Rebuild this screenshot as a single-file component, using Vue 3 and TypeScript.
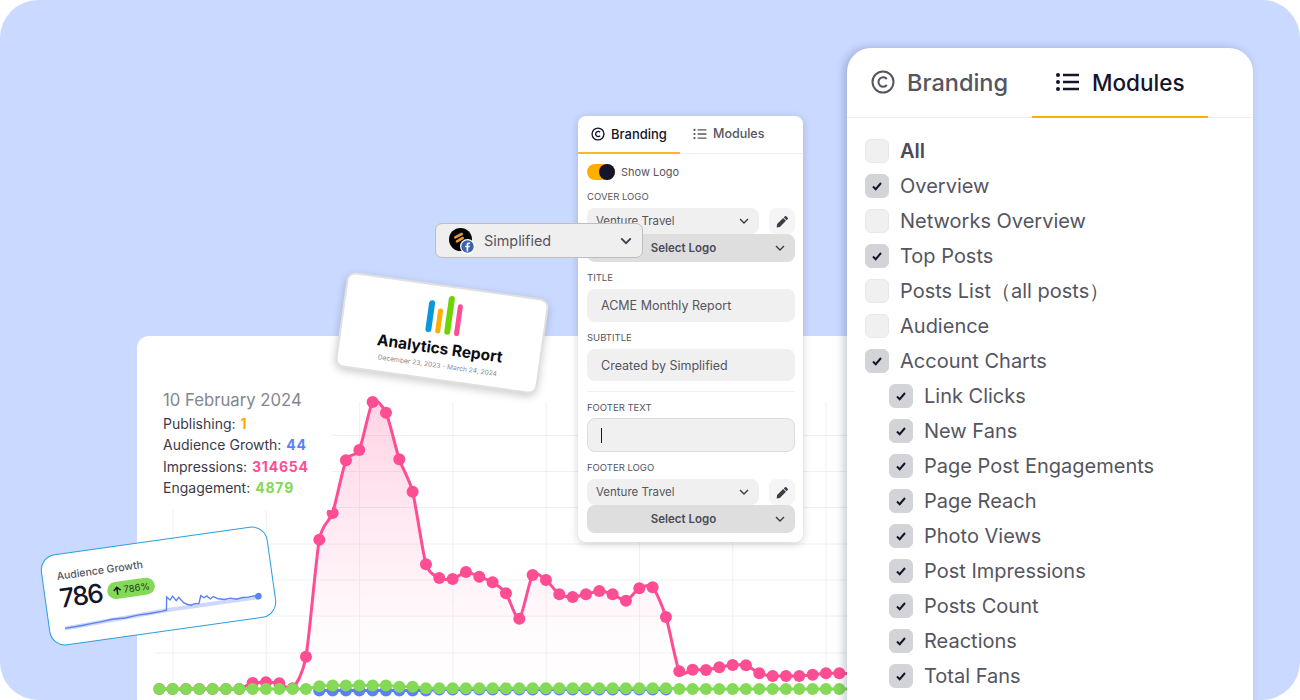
<template>
  <div class="stage">
    <!-- chart card -->
    <div class="chart-card">
      <svg class="chart" width="900" height="364" viewBox="137 336 900 364">
        <defs>
          <linearGradient id="pinkFill" x1="0" y1="0" x2="0" y2="1">
            <stop offset="0" stop-color="#ff4d94" stop-opacity="0.24" />
            <stop offset="0.8" stop-color="#ff4d94" stop-opacity="0.02" />
            <stop offset="1" stop-color="#ff4d94" stop-opacity="0" />
          </linearGradient>
        </defs>
        <line v-for="x in gridX" :key="'v' + x" :x1="x" :x2="x" y1="402" y2="695" class="grid" />
        <line v-for="y in gridY" :key="'h' + y" x1="154" x2="847" :y1="y" :y2="y" class="grid" />
        <path :d="areaPath" fill="url(#pinkFill)" />
        <path :d="linePath(bluePts)" class="line" stroke="#5b82f5" />
        <circle v-for="p in bluePts" :key="'b' + p.x" :cx="p.x" :cy="p.y" r="6" fill="#5b82f5" />
        <path :d="linePath(pinkPts)" class="line" stroke="#ff4d94" />
        <circle v-for="p in pinkPts" :key="'p' + p.x" :cx="p.x" :cy="p.y" r="6" fill="#ff4d94" />
        <path :d="linePath(greenPts)" class="line" stroke="#84d957" />
        <circle v-for="p in greenPts" :key="'g' + p.x" :cx="p.x" :cy="p.y" r="6" fill="#84d957" />
      </svg>
      <div class="chart-tip">
        <div class="tip-date">10 February 2024</div>
        <div class="tip-row">Publishing: <b class="c-orange">1</b></div>
        <div class="tip-row">Audience Growth: <b class="c-blue">44</b></div>
        <div class="tip-row">Impressions: <b class="c-pink">314654</b></div>
        <div class="tip-row">Engagement: <b class="c-green">4879</b></div>
      </div>
    </div>

    <!-- audience growth card -->
    <div class="growth-card">
      <div class="growth-title">Audience Growth</div>
      <div class="growth-main">
        <span class="growth-num">786</span>
        <span class="growth-pill">
          <svg width="10" height="10" viewBox="0 0 10 10"><path d="M5 9V1.5M1.6 4.8 5 1.4l3.4 3.4" fill="none" stroke="#14142b" stroke-width="1.5" /></svg>
          786%
        </span>
      </div>
      <svg class="spark" width="225" height="88" viewBox="0 0 225 88">
        <path d="M14 73L118 69L210 69" fill="none" stroke="#5b82f5" stroke-opacity="0.3" stroke-width="4" />
        <path d="M14 73L30 72.5L38 72L50 71.5L62 70.5L75 71L88 70L100 70L112 69.5L117 69L119 56L122 59.5L125 56L128 61L131 58L135 64L138 66L142 67.500L146 66.500L150 67L153 59.500L156 62L159 60.500L162 64L165 62L170 65L176 66.500L182 66L188 68L194 67L200 67.500L205 67L210 68" fill="none" stroke="#5b82f5" stroke-width="1.4" />
        <circle cx="210" cy="68" r="3.3" fill="#5b82f5" />
      </svg>
    </div>

    <!-- report cover -->
    <div class="report-card">
      <div class="report-bars">
        <span class="bar bar-blue"></span>
        <span class="bar bar-orange"></span>
        <span class="bar bar-green"></span>
        <span class="bar bar-pink"></span>
      </div>
      <div class="report-title">Analytics Report</div>
      <div class="report-date">December 23, 2023 - March 24, 2024</div>
    </div>

    <!-- small settings panel -->
    <div class="mini-panel">
      <div class="mini-tabs">
        <div class="mini-tab active">
          <svg width="14" height="14" viewBox="0 0 24 24"><circle cx="12" cy="12" r="10.2" fill="none" stroke="currentColor" stroke-width="2.3" /><path d="M15.6 9a4.4 4.4 0 1 0 0 6" fill="none" stroke="currentColor" stroke-width="2.3" /></svg>
          Branding
        </div>
        <div class="mini-tab">
          <svg width="14" height="14" viewBox="0 0 24 24"><path d="M8 5h15M8 12h15M8 19h15" stroke="currentColor" stroke-width="2.4" /><circle cx="2.5" cy="5" r="1.9" fill="currentColor" /><circle cx="2.5" cy="12" r="1.9" fill="currentColor" /><circle cx="2.5" cy="19" r="1.9" fill="currentColor" /></svg>
          Modules
        </div>
      </div>
      <div class="mini-body">
        <div class="toggle-row">
          <span class="toggle"><span class="toggle-knob"></span></span>
          Show Logo
        </div>
        <div class="label label-first">COVER LOGO</div>
        <div class="logo-row">
          <div class="logo-select">
            Venture Travel
            <svg class="chev" width="10" height="6" viewBox="0 0 10 6"><path d="M1 1l4 4 4-4" /></svg>
          </div>
          <div class="pencil">
            <svg width="13" height="13" viewBox="0 0 12 12"><path d="M8.2 1.2a.9.9 0 0 1 1.3 0l1.3 1.3a.9.9 0 0 1 0 1.3l-1 1-2.6-2.6zM6.600 2.800l2.600 2.600-5.600 5.600L.6 11.600 1 8.400z" fill="#3d3d4a" /></svg>
          </div>
        </div>
        <div class="select-logo">
          Select Logo
          <svg class="chev" width="10" height="6" viewBox="0 0 10 6"><path d="M1 1l4 4 4-4" /></svg>
        </div>
        <div class="label">TITLE</div>
        <div class="text-input">ACME Monthly Report</div>
        <div class="label">SUBTITLE</div>
        <div class="text-input short">Created by Simplified</div>
        <div class="divider"></div>
        <div class="label tight">FOOTER TEXT</div>
        <div class="text-input focus"><span class="caret"></span></div>
        <div class="label">FOOTER LOGO</div>
        <div class="logo-row">
          <div class="logo-select">
            Venture Travel
            <svg class="chev" width="10" height="6" viewBox="0 0 10 6"><path d="M1 1l4 4 4-4" /></svg>
          </div>
          <div class="pencil">
            <svg width="13" height="13" viewBox="0 0 12 12"><path d="M8.2 1.2a.9.9 0 0 1 1.3 0l1.3 1.3a.9.9 0 0 1 0 1.3l-1 1-2.6-2.6zM6.600 2.800l2.600 2.600-5.600 5.600L.6 11.600 1 8.400z" fill="#3d3d4a" /></svg>
          </div>
        </div>
        <div class="select-logo">
          Select Logo
          <svg class="chev" width="10" height="6" viewBox="0 0 10 6"><path d="M1 1l4 4 4-4" /></svg>
        </div>
      </div>
    </div>

    <!-- account dropdown -->
    <div class="account">
      <span class="avatar">
        <svg width="23" height="23" viewBox="0 0 23 23">
          <circle cx="11.5" cy="11.5" r="11.5" fill="#050505" />
          <path d="M6.300 9.300 12.700 6M8 13.300 13.700 10" stroke="#e59a35" stroke-width="2.600" stroke-linecap="round" />
        </svg>
        <svg class="fb" width="15" height="15" viewBox="0 0 15 15">
          <circle cx="7.5" cy="7.5" r="7.5" fill="#fff" />
          <circle cx="7.5" cy="7.5" r="6.2" fill="#3f62ad" />
          <path d="M8.200 12.400V8.300h1.400l.2-1.600H8.200v-1c0-.5.2-.8.8-.8h.9V3.500c-.4-.1-.8-.1-1.200-.1-1.300 0-2.100.8-2.100 2.100v1.200H5.200v1.600h1.400v4.100z" fill="#fff" />
        </svg>
      </span>
      <span class="account-name">Simplified</span>
      <svg class="account-chev" width="12" height="8" viewBox="0 0 12 8"><path d="M1.200 1.400 6 6.200l4.800-4.800" /></svg>
    </div>

    <!-- big modules panel -->
    <div class="big-panel">
      <div class="big-tabs">
        <div class="big-tab">
          <svg width="24" height="24" viewBox="0 0 24 24"><circle cx="12" cy="12" r="10.500" fill="none" stroke="currentColor" stroke-width="2" /><path d="M15.800 9a4.700 4.700 0 1 0 0 6" fill="none" stroke="currentColor" stroke-width="2" /></svg>
          Branding
        </div>
        <div class="big-tab active">
          <svg width="24" height="24" viewBox="0 0 24 24"><path d="M7 5h16M7 12h16M7 19h16" stroke="currentColor" stroke-width="2.400" /><circle cx="2" cy="5" r="2" fill="currentColor" /><circle cx="2" cy="12" r="2" fill="currentColor" /><circle cx="2" cy="19" r="2" fill="currentColor" /></svg>
          Modules
        </div>
      </div>
      <div class="module-list">
        <div v-for="m in modules" :key="m.name" class="module" :class="{ sub: m.sub, strong: m.strong }">
          <span class="box" :class="{ on: m.on }">
            <svg v-if="m.on" width="12" height="12" viewBox="0 0 12 12"><path d="M2 6.500 4.700 9.200 10 3" fill="none" stroke="#14142b" stroke-width="2" /></svg>
          </span>
          {{ m.name }}
        </div>
      </div>
    </div>
  </div>
</template>

<script setup lang="ts">
interface Pt {
  x: number
  y: number
}

interface Module {
  name: string
  on?: boolean
  sub?: boolean
  strong?: boolean
}

const modules: Module[] = [
  { name: 'All', strong: true },
  { name: 'Overview', on: true },
  { name: 'Networks Overview' },
  { name: 'Top Posts', on: true },
  { name: 'Posts List（all posts）' },
  { name: 'Audience' },
  { name: 'Account Charts', on: true },
  { name: 'Link Clicks', on: true, sub: true },
  { name: 'New Fans', on: true, sub: true },
  { name: 'Page Post Engagements', on: true, sub: true },
  { name: 'Page Reach', on: true, sub: true },
  { name: 'Photo Views', on: true, sub: true },
  { name: 'Post Impressions', on: true, sub: true },
  { name: 'Posts Count', on: true, sub: true },
  { name: 'Reactions', on: true, sub: true },
  { name: 'Total Fans', on: true, sub: true },
]

const gridX = [173, 266.3, 359.6, 452.9, 546.2, 639.5, 732.8, 826.1]
const gridY = [435.5, 471.5, 507.5, 544, 580, 616, 653]

const step = 13.333
const startX = 159.3

const pinkY = [
  689, 689, 689, 689, 689, 689, 689, 683, 682.3, 683.3, 688.3, 656.7, 539.7, 513, 460.3, 450, 402, 412.7, 459.3,
  491.7, 564.3, 578, 579, 572, 576.7, 582.3, 593.3, 618.7, 575, 580, 594.3, 597, 594.3, 591, 594.3, 600.7, 588.3,
  587.3, 617, 671.3, 669.7, 670, 667.3, 665, 665.3, 673.3, 676, 676, 676, 674.7, 673.3, 673.3, 674,
]

const toPts = (ys: number[], from = 0): Pt[] => ys.map((y, i) => ({ x: startX + (i + from) * step, y }))

const pinkPts = toPts(pinkY)
const greenPts = toPts(
  pinkY.map((_, i) => {
    if (i < 12) return 689
    if (i === 12) return 686.3
    if (i < 18) return 685.4
    if (i < 20) return 686.7
    if (i < 39) return 688.2
    return 689
  }),
)
const bluePts = toPts(
  Array.from({ length: 27 }, (_, i) => (i < 9 ? 690.4 : 689.4)),
  12,
)

// slightly eased line, close to what the chart lib draws
const linePath = (pts: Pt[]) => {
  const t = 0.12
  let d = `M${pts[0].x} ${pts[0].y}`
  for (let i = 0; i < pts.length - 1; i++) {
    const p0 = pts[i - 1] ?? pts[i]
    const p1 = pts[i]
    const p2 = pts[i + 1]
    const p3 = pts[i + 2] ?? p2
    const c1x = p1.x + (p2.x - p0.x) * t
    const c1y = p1.y + (p2.y - p0.y) * t
    const c2x = p2.x - (p3.x - p1.x) * t
    const c2y = p2.y - (p3.y - p1.y) * t
    d += `C${c1x.toFixed(1)} ${c1y.toFixed(1)} ${c2x.toFixed(1)} ${c2y.toFixed(1)} ${p2.x.toFixed(1)} ${p2.y.toFixed(1)}`
  }
  return d
}

const areaPath = `${linePath(pinkPts)}L${pinkPts[pinkPts.length - 1].x} 689L${startX} 689Z`
</script>

<style scoped>
.stage {
  position: relative;
  width: 1300px;
  height: 700px;
  overflow: hidden;
  background: #c9d9ff;
  border-radius: 38px;
  font-family: Inter, "Noto Sans", sans-serif;
  color: #4b4b57;
}

.chart-card {
  position: absolute;
  left: 137px;
  top: 336px;
  width: 900px;
  height: 364px;
  background: #fff;
  border-radius: 12px 0 0 0;
}

.chart {
  display: block;
}

.grid {
  stroke: #f0f0f2;
  stroke-width: 1;
}

.line {
  fill: none;
  stroke-width: 3;
}

.chart-tip {
  position: absolute;
  left: 17px;
  top: 48px;
  width: 178px;
  height: 126px;
  padding: 4px 0 0 9px;
  box-sizing: border-box;
  background: #fff;
  color: #3a3a48;
}

.tip-date {
  font-size: 16.7px;
  line-height: 24px;
  color: #85858d;
}

.tip-row {
  font-size: 14px;
  line-height: 21.5px;
  white-space: nowrap;
  position: relative;
  top: 0.5px;
}

.tip-row b {
  font-weight: 700;
  margin-left: 1px;
  letter-spacing: 0.8px;
}

.c-orange { color: #ffa800; }
.c-blue { color: #5b82f5; }
.c-pink { color: #ff4d94; }
.c-green { color: #84d957; }

.growth-card {
  position: absolute;
  left: 44px;
  top: 540px;
  width: 229px;
  height: 92px;
  box-sizing: border-box;
  padding: 14.5px 0 0 14px;
  background: #fff;
  border: 1px solid #2b9fdc;
  border-radius: 16px;
  transform: rotate(-8deg);
}

.growth-title {
  font-size: 10.5px;
  line-height: 14px;
  font-weight: 500;
  color: #55555f;
}

.growth-main {
  display: flex;
  align-items: center;
  gap: 6px;
  margin-top: 2px;
}

.growth-num {
  font-size: 26px;
  line-height: 26px;
  font-weight: 500;
  letter-spacing: -1.6px;
  color: #14142b;
}

.growth-pill {
  display: flex;
  align-items: center;
  gap: 1px;
  height: 17px;
  padding: 0 5px;
  border-radius: 9px;
  background: #84d957;
  font-size: 9.5px;
  color: #1e3a1a;
}

.spark {
  position: absolute;
  left: 1px;
  top: 1px;
}

.report-card {
  position: absolute;
  left: 340px;
  top: 285px;
  width: 204px;
  height: 96px;
  box-sizing: border-box;
  padding-top: 8px;
  display: flex;
  flex-direction: column;
  align-items: center;
  background: #fff;
  border: 2px solid #e0e0e0;
  border-radius: 9px;
  box-shadow: 0 3px 8px rgba(0, 0, 0, 0.2);
  transform: rotate(8deg);
}

.report-bars {
  display: flex;
  align-items: flex-end;
  gap: 4px;
  height: 39px;
}

.bar {
  width: 5.5px;
  border-radius: 3px;
}

.bar-blue { height: 32px; background: #0a98dc; }
.bar-orange { height: 25px; background: #ffae00; }
.bar-green { height: 39px; background: #6cd400; }
.bar-pink { height: 32px; background: #ff4d94; }

.report-title {
  margin-top: 5px;
  font-size: 15.5px;
  line-height: 20px;
  font-weight: 700;
  color: #0c0c14;
  white-space: nowrap;
}

.report-date {
  font-size: 6.7px;
  line-height: 10px;
  margin-top: 2px;
  color: #8a8a90;
  white-space: nowrap;
}

.mini-panel {
  position: absolute;
  left: 578px;
  top: 116px;
  width: 225px;
  height: 426px;
  background: #fff;
  border-radius: 8px;
  box-shadow: 0 2px 8px rgba(0, 0, 0, 0.18);
}

.mini-tabs {
  display: flex;
  height: 38px;
  box-sizing: border-box;
  border-bottom: 1px solid #eee;
}

.mini-tab {
  display: flex;
  align-items: center;
  gap: 6px;
  height: 38px;
  box-sizing: border-box;
  padding: 0 0 3px 13px;
  font-size: 12.5px;
  font-weight: 500;
  color: #55555f;
}

.mini-tab.active {
  width: 102px;
  padding-bottom: 1px;
  font-size: 13px;
  color: #14142b;
  border-bottom: 2px solid #ffb52e;
}

.mini-body {
  padding: 10px 8px 0 9px;
}

.toggle-row {
  display: flex;
  align-items: center;
  gap: 6px;
  height: 16px;
  font-size: 11px;
  color: #55555f;
}

.toggle {
  position: relative;
  display: block;
  width: 28px;
  height: 16px;
  border-radius: 8px;
  background: #ffae00;
}

.toggle-knob {
  position: absolute;
  right: 0;
  top: 0;
  width: 16px;
  height: 16px;
  border-radius: 50%;
  background: #14142b;
}

.label {
  height: 12px;
  margin: 10px 0 5px;
  font-size: 9.5px;
  line-height: 12px;
  color: #55555f;
}

.label-first {
  margin-top: 11px;
}

.label.tight {
  margin-bottom: 4px;
}

.logo-row {
  display: flex;
  gap: 10px;
  height: 26px;
}

.logo-select {
  flex: 1;
  display: flex;
  align-items: center;
  justify-content: space-between;
  padding: 0 10px 0 9px;
  background: #f0f0f0;
  border-radius: 8px;
  font-size: 11.5px;
  color: #55555f;
}

.pencil {
  display: flex;
  align-items: center;
  justify-content: center;
  width: 26px;
  border-radius: 7px;
  background: #f5f5f5;
}

.chev {
  fill: none;
  stroke: #3d3d4a;
  stroke-width: 1.4;
}

.select-logo {
  position: relative;
  display: flex;
  align-items: center;
  justify-content: center;
  height: 28px;
  padding-right: 15px;
  background: #dedede;
  border-radius: 8px;
  font-size: 11.5px;
  font-weight: 600;
  color: #4b4b57;
}

.select-logo .chev {
  position: absolute;
  right: 10px;
  top: 11px;
}

.text-input {
  display: flex;
  align-items: center;
  height: 33px;
  box-sizing: border-box;
  padding-left: 14px;
  background: #f0f0f0;
  border-radius: 8px;
  font-size: 12.5px;
  color: #55555f;
}

.text-input.short {
  height: 32px;
}

.text-input.focus {
  height: 34px;
  border: 1px solid #dcdcdc;
  padding-left: 13px;
}

.caret {
  display: block;
  width: 1px;
  height: 15px;
  background: #14142b;
}

.divider {
  height: 1px;
  margin-top: 10px;
  background: #f1f1f1;
}

.account {
  position: absolute;
  left: 435px;
  top: 223px;
  width: 208px;
  height: 35px;
  box-sizing: border-box;
  display: flex;
  align-items: center;
  padding-left: 13px;
  background: #efefef;
  border: 1px solid #bdbdc2;
  border-radius: 7px;
}

.avatar {
  position: relative;
  display: block;
  width: 23px;
  height: 23px;
  margin-top: -2px;
}

.avatar svg {
  display: block;
}

.fb {
  position: absolute;
  left: 11px;
  top: 11px;
}

.account-name {
  margin-left: 12px;
  font-size: 14.4px;
  color: #55555f;
}

.account-chev {
  position: absolute;
  right: 10px;
  top: 13px;
  fill: none;
  stroke: #3d3d4a;
  stroke-width: 1.8;
}

.big-panel {
  position: absolute;
  left: 847px;
  top: 48px;
  width: 406px;
  height: 700px;
  background: #fff;
  border-radius: 24px;
  box-shadow: -3px 0 8px rgba(30, 40, 80, 0.25);
}

.big-tabs {
  display: flex;
  height: 70px;
  box-sizing: border-box;
  border-bottom: 1px solid #eee;
}

.big-tab {
  display: flex;
  align-items: center;
  gap: 12px;
  height: 70px;
  box-sizing: border-box;
  padding: 0 0 2px 24px;
  width: 185px;
  font-size: 23.5px;
  font-weight: 500;
  color: #55555f;
}

.big-tab.active {
  width: 176px;
  padding-bottom: 0;
  font-size: 22.5px;
  color: #14142b;
  border-bottom: 2px solid #ffae00;
}

.module-list {
  padding: 15.5px 0 0 18px;
}

.module {
  display: flex;
  align-items: center;
  gap: 11px;
  height: 35px;
  font-size: 20px;
  color: #55555f;
  white-space: nowrap;
}

.module.sub {
  padding-left: 24px;
}

.module.strong {
  font-weight: 600;
  color: #4b4b57;
}

.box {
  display: flex;
  align-items: center;
  justify-content: center;
  width: 24px;
  height: 24px;
  box-sizing: border-box;
  border-radius: 6px;
  background: #f0f0f0;
  border: 1px solid #e8e8e8;
}

.box.on {
  background: #d2d4d8;
  border-color: #d2d4d8;
}
</style>

<style>
html,
body {
  background: #fff;
}
</style>
